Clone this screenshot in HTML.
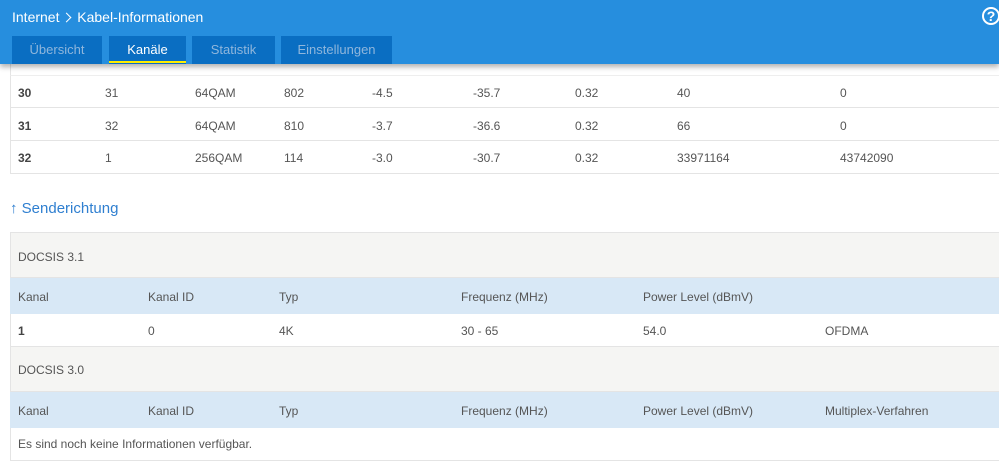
<!DOCTYPE html><html><head><style>
body{margin:0;width:999px;height:462px;overflow:hidden;background:#fff;font-family:"Liberation Sans",sans-serif;color:#555;font-size:12px;position:relative}
.a{position:absolute;white-space:nowrap}
.hdr{position:absolute;left:0;top:0;width:999px;height:64px;background:#268ede;box-shadow:0 3px 5px rgba(0,0,0,.3);z-index:2}
.tab{position:absolute;top:36px;height:28px;background:#0a6ec2;color:#8fb6dc;font-size:13px;text-align:center;line-height:27px}
.row{position:absolute;left:10px;width:989px;border-left:1px solid #e4e4e4;border-bottom:1px solid #e4e4e4;box-sizing:border-box}
</style></head><body>
<div class="hdr">
<div class="a" style="left:12px;top:9px;color:#fff;font-size:14px">Internet <span style="display:inline-block;width:6px;height:6px;border-top:1.3px solid #fff;border-right:1.3px solid #fff;transform:rotate(45deg);margin:0 3px 1px 0"></span> Kabel-Informationen</div>
<div class="a" style="left:982px;top:7px;width:18px;height:18px;border:2px solid #fff;border-radius:50%;box-sizing:border-box;color:#fff;font-weight:bold;font-size:14px;line-height:15px;text-align:center">?</div>
<div class="tab" style="left:12px;width:90px">Übersicht</div>
<div class="tab" style="left:109px;width:77px;color:#fff">Kanäle<div style="position:absolute;left:0;right:0;bottom:1px;height:2px;background:#ffee00"></div></div>
<div class="tab" style="left:192px;width:83px">Statistik</div>
<div class="tab" style="left:281px;width:111px">Einstellungen</div>
</div>
<div class="row" style="top:64px;height:12px;border-bottom:1px solid #eee"></div>
<div class="row" style="top:76px;height:32px"></div>
<div class="row" style="top:108px;height:33px"></div>
<div class="row" style="top:141px;height:33px"></div>
<div class="a" style="top:86px;left:18px;font-weight:bold;color:#444">30</div>
<div class="a" style="top:119px;left:18px;font-weight:bold;color:#444">31</div>
<div class="a" style="top:151px;left:18px;font-weight:bold;color:#444">32</div>
<div class="a" style="top:86px;left:105px">31</div><div class="a" style="top:86px;left:195px">64QAM</div><div class="a" style="top:86px;left:284px">802</div><div class="a" style="top:86px;left:372px">-4.5</div><div class="a" style="top:86px;left:473px">-35.7</div><div class="a" style="top:86px;left:575px">0.32</div><div class="a" style="top:86px;left:677px">40</div><div class="a" style="top:86px;left:840px">0</div>
<div class="a" style="top:119px;left:105px">32</div><div class="a" style="top:119px;left:195px">64QAM</div><div class="a" style="top:119px;left:284px">810</div><div class="a" style="top:119px;left:372px">-3.7</div><div class="a" style="top:119px;left:473px">-36.6</div><div class="a" style="top:119px;left:575px">0.32</div><div class="a" style="top:119px;left:677px">66</div><div class="a" style="top:119px;left:840px">0</div>
<div class="a" style="top:151px;left:105px">1</div><div class="a" style="top:151px;left:195px">256QAM</div><div class="a" style="top:151px;left:284px">114</div><div class="a" style="top:151px;left:372px">-3.0</div><div class="a" style="top:151px;left:473px">-30.7</div><div class="a" style="top:151px;left:575px">0.32</div><div class="a" style="top:151px;left:677px">33971164</div><div class="a" style="top:151px;left:840px">43742090</div>
<div class="a" style="top:200px;left:10px;color:#2f7fd0;font-size:15px">↑ Senderichtung</div>
<div class="row" style="top:232px;height:46px;background:#f5f5f3;border-top:1px solid #e4e4e4"></div>
<div class="row" style="top:278px;height:36px;background:#d8e8f6;border:0"></div>
<div class="row" style="top:314px;height:33px"></div>
<div class="row" style="top:347px;height:45px;background:#f5f5f3"></div>
<div class="row" style="top:392px;height:36px;background:#d8e8f6;border:0"></div>
<div class="row" style="top:428px;height:33px"></div>
<div class="a" style="top:250px;left:18px">DOCSIS 3.1</div>
<div class="a" style="top:290px;left:18px">Kanal</div><div class="a" style="top:290px;left:148px">Kanal ID</div><div class="a" style="top:290px;left:279px">Typ</div><div class="a" style="top:290px;left:461px">Frequenz (MHz)</div><div class="a" style="top:290px;left:643px">Power Level (dBmV)</div>
<div class="a" style="top:324px;left:18px;font-weight:bold;color:#444">1</div><div class="a" style="top:324px;left:148px">0</div><div class="a" style="top:324px;left:279px">4K</div><div class="a" style="top:324px;left:461px">30 - 65</div><div class="a" style="top:324px;left:643px">54.0</div><div class="a" style="top:324px;left:825px">OFDMA</div>
<div class="a" style="top:363px;left:18px">DOCSIS 3.0</div>
<div class="a" style="top:404px;left:18px">Kanal</div><div class="a" style="top:404px;left:148px">Kanal ID</div><div class="a" style="top:404px;left:279px">Typ</div><div class="a" style="top:404px;left:461px">Frequenz (MHz)</div><div class="a" style="top:404px;left:643px">Power Level (dBmV)</div><div class="a" style="top:404px;left:825px">Multiplex-Verfahren</div>
<div class="a" style="top:437px;left:18px">Es sind noch keine Informationen verfügbar.</div>
</body></html>
